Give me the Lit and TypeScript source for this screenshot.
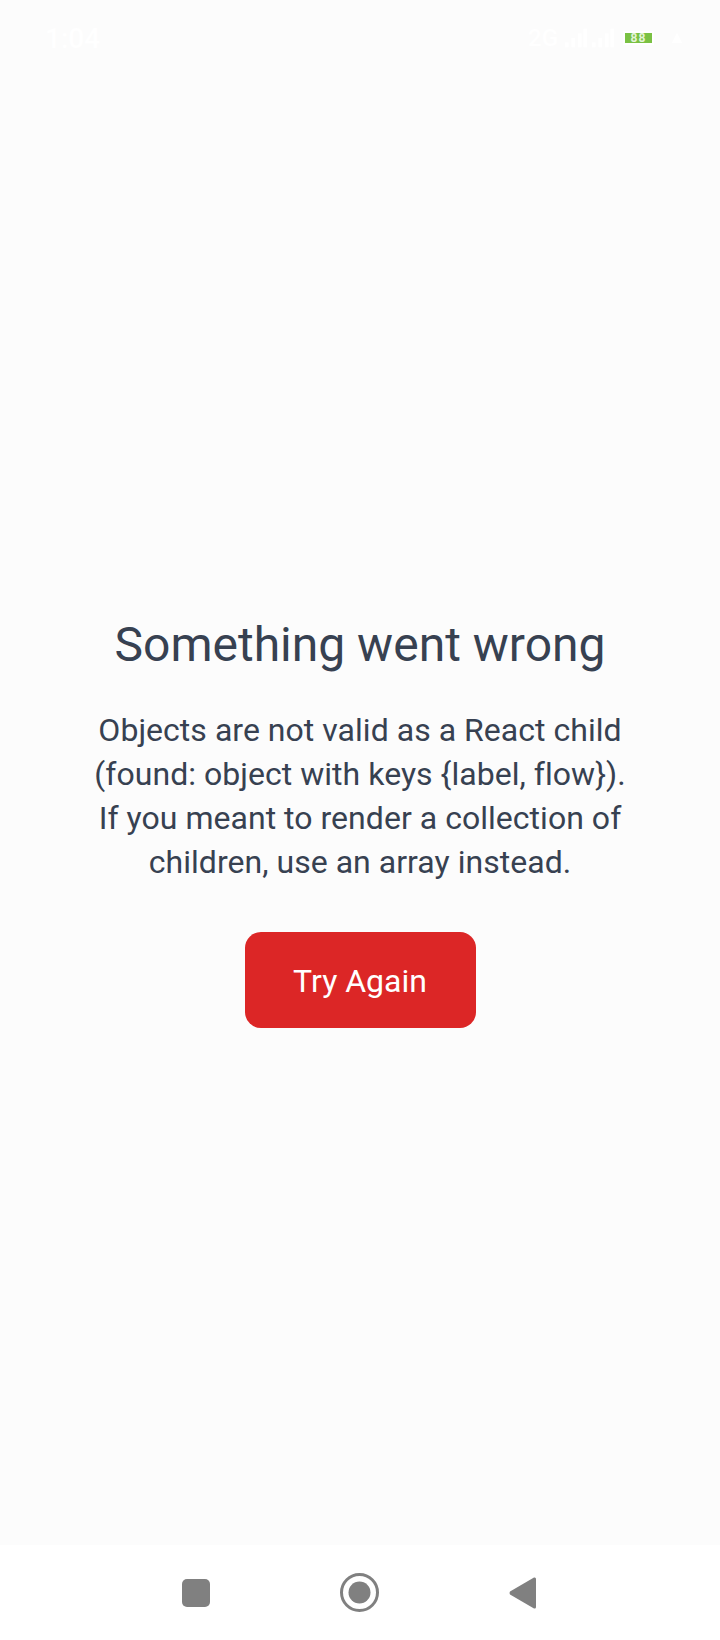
import { LitElement, css, html } from 'lit';
import { customElement } from 'lit/decorators.js';

@customElement('app-root')
export class AppRoot extends LitElement {
  static styles = css`
    :host {
      display: flex;
      flex-direction: column;
      height: 1640px;
      background: #fcfcfc;
      font-family: Roboto, sans-serif;
      color: #374151;
    }
    .status {
      height: 76px;
      flex: none;
      display: flex;
      align-items: center;
      justify-content: space-between;
      padding: 0 38px 0 45px;
      color: #fff;
      font-size: 28px;
      font-weight: 500;
    }
    .status-right {
      display: flex;
      align-items: center;
      gap: 5px;
    }
    .net {
      font-size: 24px;
      margin-right: 2px;
    }
    .status-right svg {
      display: block;
      fill: #fff;
    }
    .battery {
      width: 27px;
      height: 10px;
      margin: 0 15px 0 6px;
      background: #7ac143;
      outline: 2px solid #fff;
      color: #e4f3d8;
      font-size: 12px;
      line-height: 10px;
      font-weight: 700;
      letter-spacing: 1px;
      text-align: center;
    }
    main {
      flex: 1;
      display: flex;
      flex-direction: column;
      align-items: center;
      justify-content: center;
      padding: 24px 90px 0;
      text-align: center;
    }
    h1 {
      margin: 0 0 35px;
      font-size: 48px;
      line-height: 56px;
      font-weight: 400;
      white-space: nowrap;
    }
    p {
      margin: 0 0 48px;
      font-size: 32px;
      line-height: 44px;
      letter-spacing: 0.03px;
    }
    button {
      width: 231px;
      height: 96px;
      padding: 2px 0 0;
      border: none;
      border-radius: 16px;
      background: #dc2626;
      color: #fff;
      font: 400 32px Roboto, sans-serif;
    }
    nav {
      height: 95px;
      flex: none;
      background: #fff;
      display: flex;
      align-items: center;
      justify-content: center;
      gap: 130px;
      padding-right: 2px;
    }
    nav svg {
      display: block;
      fill: #808080;
    }
  `;

  render() {
    return html`
      <div class="status">
        <span>1:04</span>
        <div class="status-right">
          <span class="net">2G</span>
          <svg width="22" height="20" viewBox="0 0 24 20"><path d="M0 15h4v5H0zM7 10h4v10H7zM14 5h4v15h-4zM20 0h4v20h-4z"/></svg>
          <svg width="22" height="20" viewBox="0 0 24 20"><path d="M0 15h4v5H0zM7 10h4v10H7zM14 5h4v15h-4zM20 0h4v20h-4z"/></svg>
          <span class="battery">88</span>
          <svg width="10" height="10" viewBox="0 0 10 10"><path d="M5 0l5 10H0z"/></svg>
        </div>
      </div>
      <main>
        <h1>Something went wrong</h1>
        <p>Objects are not valid as a React child (found: object with keys {label, flow}). If you meant to render a collection of children, use an array instead.</p>
        <button>Try Again</button>
      </main>
      <nav>
        <svg width="28" height="28" viewBox="0 0 28 28"><rect width="28" height="28" rx="5"/></svg>
        <svg width="39" height="39" viewBox="0 0 39 39"><circle cx="19.5" cy="19.5" r="18" fill="none" stroke="#808080" stroke-width="3"/><circle cx="19.5" cy="19.5" r="11"/></svg>
        <svg width="27" height="32" viewBox="0 0 27 32"><path d="M25 .5Q27 0 27 2V30Q27 32 25 31.5L1 17.5Q0 16 1 14.5Z"/></svg>
      </nav>
    `;
  }
}
